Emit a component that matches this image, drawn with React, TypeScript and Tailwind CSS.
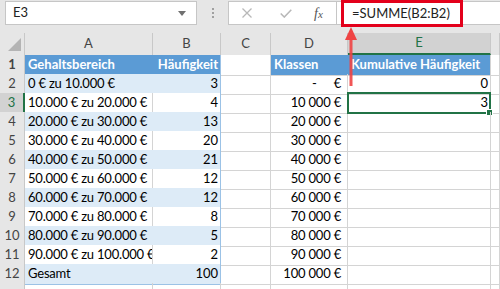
import React from 'react';

const cols = 'grid grid-cols-[25px_128px_68px_50px_77px_143px_9px]';
const grid = 'border-r border-b border-[#d4d4d4]';

const ranges = [
  ['0 € zu 10.000 €', '3', '-', '0'],
  ['10.000 € zu 20.000 €', '4', '10 000 €', '3'],
  ['20.000 € zu 30.000 €', '13', '20 000 €', ''],
  ['30.000 € zu 40.000 €', '20', '30 000 €', ''],
  ['40.000 € zu 50.000 €', '21', '40 000 €', ''],
  ['50.000 € zu 60.000 €', '12', '50 000 €', ''],
  ['60.000 € zu 70.000 €', '12', '60 000 €', ''],
  ['70.000 € zu 80.000 €', '8', '70 000 €', ''],
  ['80.000 € zu 90.000 €', '5', '80 000 €', ''],
  ['90.000 € zu 100.000 €', '2', '90 000 €', ''],
  ['Gesamt', '100', '100 000 €', ''],
];

function RowHead({ n, active }: { n?: number; active?: boolean }) {
  return (
    <div
      className={
        active
          ? 'flex items-center justify-center bg-[#d2d2d2] text-[#217346] border-r-2 border-r-[#217346] border-b border-b-[#c8c8c8]'
          : 'flex items-center justify-center bg-[#e6e6e6] text-[#444] border-r border-b border-[#c8c8c8]'
      }
    >
      {n}
    </div>
  );
}

function DataRow({ n, row }: { n: number; row: string[] }) {
  const [a, b, d, e] = row;
  const shaded = n % 2 === 0;
  const fill = shaded ? 'bg-[#ddebf7]' : 'bg-white';
  return (
    <div className={`${cols} h-[19px]`}>
      <RowHead n={n} active={n === 3} />
      <div
        className={`${fill} border-b border-b-[#9bc2e6] border-r ${
          shaded ? 'border-r-[#ddebf7]' : 'border-r-[#d4d4d4]'
        } pl-[3px] flex items-center overflow-hidden whitespace-nowrap tracking-[-0.2px]`}
      >
        {a}
      </div>
      <div className={`${fill} border-b border-r border-[#9bc2e6] pr-[2px] flex items-center justify-end`}>{b}</div>
      <div className={grid} />
      <div className={`${grid} flex items-center justify-end pr-[6px] tracking-[-0.2px]`}>
        {d === '-' ? (
          <>
            <span className="mr-[17px]">-</span>
            <span>€</span>
          </>
        ) : (
          d
        )}
      </div>
      <div className={`${grid} relative flex items-center justify-end pr-[2px]`}>
        {e}
        {n === 3 && (
          <div className="absolute -left-px -top-px -right-px -bottom-px border-2 border-[#217346]">
            <div className="absolute -right-[4px] -bottom-[4px] w-[7px] h-[7px] bg-[#217346] border border-white" />
          </div>
        )}
      </div>
      <div className={grid} />
    </div>
  );
}

export default function App() {
  const headers = ['A', 'B', 'C', 'D', 'E', ''];
  return (
    <div className="relative w-[500px] h-[289px] overflow-hidden bg-white text-[13px] text-black font-['Lato',sans-serif]">
      {/* formula bar */}
      <div className="h-[33px] bg-[#e6e6e6] flex items-start pt-px">
        <div className="ml-[5px] w-[192px] h-[24px] bg-white border border-[#c6c6c6] flex items-center justify-between pl-[7px] pr-[10px] text-[#222]">
          <span>E3</span>
          <svg width="8" height="5" viewBox="0 0 8 5">
            <path d="M0 0h8L4 5z" fill="#707070" />
          </svg>
        </div>
        <div className="w-[31px] h-[24px] flex flex-col items-center justify-center gap-[2px]">
          <div className="w-[2px] h-[2px] bg-[#a0a0a0]" />
          <div className="w-[2px] h-[2px] bg-[#a0a0a0]" />
          <div className="w-[2px] h-[2px] bg-[#a0a0a0]" />
        </div>
        <div className="w-[109px] h-[24px] bg-white border border-[#c6c6c6] flex items-center">
          <svg className="ml-[13px]" width="10" height="10" viewBox="0 0 10 10">
            <path d="M0.5 0.5l9 9M9.5 0.5l-9 9" stroke="#b8b8b8" strokeWidth="1.3" />
          </svg>
          <svg className="ml-[28px]" width="12" height="9" viewBox="0 0 12 9">
            <path d="M0.7 4.5l3.6 3.6L11.3 0.8" stroke="#b8b8b8" strokeWidth="1.5" fill="none" />
          </svg>
          <span className="ml-[22px] font-['Liberation_Serif',serif] italic text-[14px] text-[#555]">
            f<span className="text-[11px]">x</span>
          </span>
        </div>
        <div className="flex-1 h-[24px] bg-white border-y border-[#c6c6c6]">
          <div className="ml-[4px] -mt-[2px] w-[122px] h-[27px] border-[3px] border-[#e3001b] flex items-center pl-[8px] text-[#222]">
            =SUMME(B2:B2)
          </div>
        </div>
      </div>

      {/* column headers */}
      <div className={`${cols} h-[22px] bg-[#e6e6e6] text-[#444]`}>
        <div className="relative border-r border-[#c8c8c8]">
          <svg className="absolute right-[3px] bottom-[4px]" width="13" height="13" viewBox="0 0 13 13">
            <path d="M13 0V13H0z" fill="#b4b4b4" />
          </svg>
        </div>
        {headers.map((h, i) =>
          h === 'E' ? (
            <div
              key={i}
              className="flex items-center justify-center bg-[#d2d2d2] text-[#217346] border-r border-r-[#c8c8c8] border-b-2 border-b-[#217346]"
            >
              {h}
            </div>
          ) : (
            <div key={i} className="flex items-center justify-center border-r border-[#c8c8c8]">
              {h}
            </div>
          )
        )}
      </div>

      {/* row 1 */}
      <div className={`${cols} h-[19px] font-bold text-white`}>
        <RowHead n={1} />
        <div className="bg-[#5b9bd5] border-b border-b-[#9bc2e6] pl-[3px] flex items-center">Gehaltsbereich</div>
        <div className="bg-[#5b9bd5] border-b border-r border-[#9bc2e6] pr-[2px] flex items-center justify-end">
          Häufigkeit
        </div>
        <div className={grid} />
        <div className="bg-[#5b9bd5] border-b border-b-[#d4d4d4] pl-[3px] flex items-center">Klassen</div>
        <div className="bg-[#5b9bd5] border-b border-b-[#d4d4d4] border-r border-r-[#d4d4d4] pl-[3px] flex items-center whitespace-nowrap overflow-hidden">
          Kumulative Häufigkeit
        </div>
        <div className={grid} />
      </div>

      {ranges.map((r, i) => (
        <DataRow key={i} n={i + 2} row={r} />
      ))}

      <div className={`${cols} h-[19px]`}>
        <RowHead />
        <div className={grid} />
        <div className={grid} />
        <div className={grid} />
        <div className={grid} />
        <div className={grid} />
        <div className={grid} />
      </div>

      {/* annotation arrow */}
      <svg className="absolute left-[344px] top-[27px]" width="14" height="60" viewBox="0 0 14 60">
        <path d="M7 0L13 13H1z" fill="#ef4444" />
        <rect x="5.5" y="12" width="3" height="47" fill="#ef4444" opacity="0.9" />
      </svg>
    </div>
  );
}
